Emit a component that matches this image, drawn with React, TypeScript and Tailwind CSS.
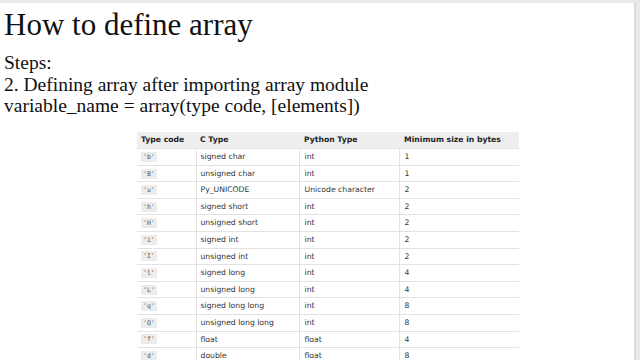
const ROWS: [string, string, string, string][] = [
  ["b", "signed char", "int", "1"],
  ["B", "unsigned char", "int", "1"],
  ["u", "Py_UNICODE", "Unicode character", "2"],
  ["h", "signed short", "int", "2"],
  ["H", "unsigned short", "int", "2"],
  ["i", "signed int", "int", "2"],
  ["I", "unsigned int", "int", "2"],
  ["l", "signed long", "int", "4"],
  ["L", "unsigned long", "int", "4"],
  ["q", "signed long long", "int", "8"],
  ["Q", "unsigned long long", "int", "8"],
  ["f", "float", "float", "4"],
  ["d", "double", "float", "8"],
];

export default function App() {
  return (
    <div className="w-[640px] h-[360px] overflow-hidden bg-[#e9e9eb] pt-[3px] pr-[4px]">
      <div className="h-full bg-white border-r-[2px] border-[#dcdcdf] overflow-hidden">
        <div className="pl-[4px] pt-[4px] text-[#111] font-['Liberation_Serif',serif]">
          <h1 className="text-[31px] leading-[36px]">How to define array</h1>
          <div className="mt-[9px] text-[19.5px] leading-[21.5px]">
            <p>Steps:</p>
            <p>2. Defining array after importing array module</p>
            <p>variable_name = array(type code, [elements])</p>
          </div>
        </div>

        <table className="ml-[137px] mt-[15px] w-[382px] border-collapse font-['DejaVu_Sans',sans-serif] text-[7.7px] text-[#333] table-fixed">
          <colgroup>
            <col className="w-[59px]" />
            <col className="w-[103px]" />
            <col className="w-[100px]" />
            <col className="w-[120px]" />
          </colgroup>
          <thead>
            <tr className="bg-[#eeeeee] h-[17px] text-left text-[#222]">
              <th className="pl-[4px] font-bold">Type code</th>
              <th className="pl-[4px] font-bold">C Type</th>
              <th className="pl-[5px] font-bold">Python Type</th>
              <th className="pl-[5px] font-bold">Minimum size in bytes</th>
            </tr>
          </thead>
          <tbody>
            {ROWS.map(([code, c, py, size]) => (
              <tr key={code} className="h-[16.6px] border-t border-[#e2e2e2]">
                <td className="pl-[4px] border-r border-[#e2e2e2]">
                  <span className="bg-[#ececec] px-[2px] py-[1px] font-['DejaVu_Sans_Mono',monospace] text-[6.5px] text-[#555]">
                    '{code}'
                  </span>
                </td>
                <td className="pl-[4px] border-r border-[#e2e2e2]">{c}</td>
                <td className="pl-[5px] border-r border-[#e2e2e2]">{py}</td>
                <td className="pl-[5px]">{size}</td>
              </tr>
            ))}
          </tbody>
        </table>
      </div>
    </div>
  );
}
